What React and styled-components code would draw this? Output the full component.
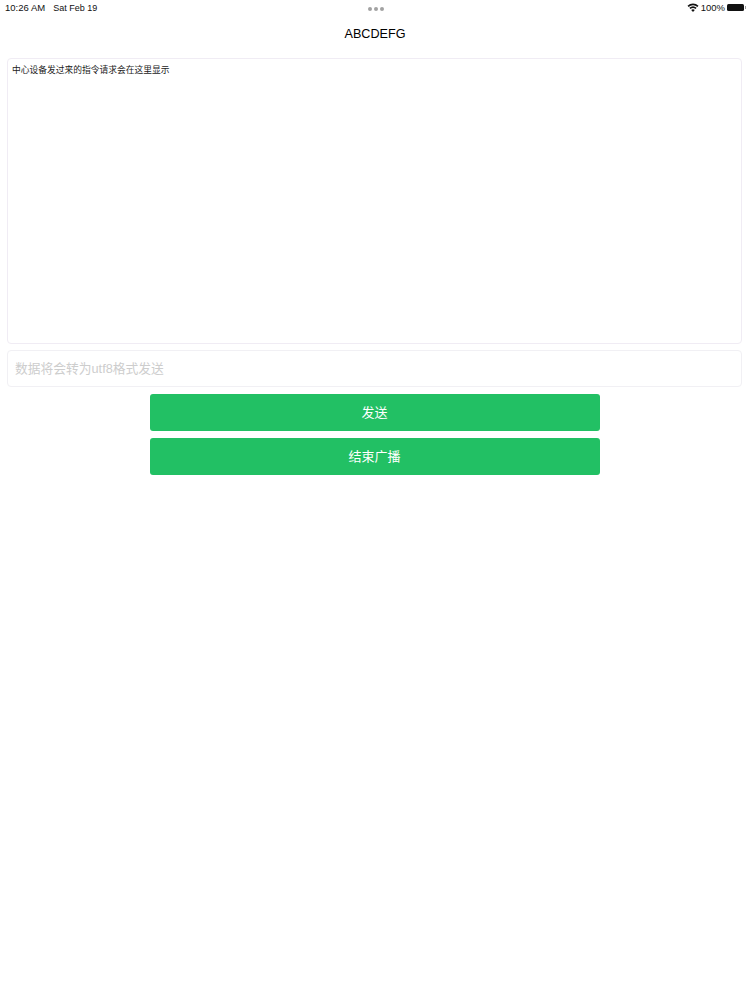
import React from 'react'
import styled, { createGlobalStyle } from 'styled-components'

const Global = createGlobalStyle`
  html, body {
    margin: 0;
    padding: 0;
    background: #fff;
  }
  * {
    box-sizing: border-box;
  }
`

const Page = styled.div`
  width: 750px;
  height: 1000px;
  background: #fff;
  color: #000;
  font-family: "Liberation Sans", "Noto Sans CJK SC", sans-serif;
`

const StatusBar = styled.div`
  height: 14px;
  padding: 0 4px 0 5px;
  display: grid;
  grid-template-columns: 1fr auto 1fr;
  align-items: center;
  font-size: 9.5px;
  color: #111;
`

const StatusLeft = styled.div`
  display: flex;
  align-items: baseline;
  gap: 8px;
`

const DateText = styled.span`
  font-size: 9px;
`

const StatusRight = styled.div`
  display: flex;
  align-items: center;
  justify-content: flex-end;
  gap: 2px;
`

const Dots = styled.div`
  display: flex;
  gap: 2px;
  margin-top: 4px;
`

const Dot = styled.span`
  width: 4px;
  height: 4px;
  border-radius: 50%;
  background: #a2a2a2;
`

const Battery = styled.div`
  display: flex;
  align-items: center;
  gap: 1px;
  &::after {
    content: '';
    width: 1px;
    height: 3px;
    background: #999;
  }
`

const BatteryBody = styled.span`
  width: 17px;
  height: 7px;
  border-radius: 1.5px;
  background: #111;
`

const Title = styled.h1`
  margin: 0;
  height: 38px;
  padding-top: 1px;
  display: flex;
  align-items: center;
  justify-content: center;
  font-size: 12.6px;
  font-weight: 400;
`

const Content = styled.div`
  padding: 6px 8px 0 7px;
  display: flex;
  flex-direction: column;
  align-items: center;
`

const LogBox = styled.div`
  width: 100%;
  height: 286px;
  padding: 5px 4px;
  border: 1px solid #f0ecf4;
  border-radius: 4px;
  font-size: 8.75px;
  line-height: 12px;
  color: #222;
`

const DataInput = styled.input`
  width: 100%;
  height: 37px;
  margin: 6px 0 7px;
  padding: 0 7px;
  border: 1px solid #f1f0f4;
  border-radius: 4px;
  outline: none;
  font-family: inherit;
  font-size: 12.75px;
  &::placeholder {
    color: #cdcdcd;
    opacity: 1;
  }
`

const ActionButton = styled.button`
  width: 450px;
  height: 37px;
  margin-bottom: 7px;
  padding: 0 0 2px;
  border: none;
  border-radius: 3px;
  background: #22c064;
  color: #fff;
  font-family: inherit;
  font-size: 13px;
`

const WifiIcon = () => (
  <svg width="12" height="9" viewBox="0 0 24 18" fill="#111">
    <path d="M12 18l-3.6-4.2a5.6 5.6 0 0 1 7.2 0z" />
    <path d="M6.9 12L4.7 9.5a11.300 11.300 0 0 1 14.600 0L17.100 12a8 8 0 0 0-10.200 0z" />
    <path d="M3.300 7.900L1 5.300a16.800 16.800 0 0 1 22 0l-2.300 2.600a13.300 13.300 0 0 0-17.400 0z" />
  </svg>
)

export default function App() {
  return (
    <Page>
      <Global />
      <StatusBar>
        <StatusLeft>
          <span>10:26 AM</span>
          <DateText>Sat Feb 19</DateText>
        </StatusLeft>
        <Dots>
          <Dot />
          <Dot />
          <Dot />
        </Dots>
        <StatusRight>
          <WifiIcon />
          <span>100%</span>
          <Battery>
            <BatteryBody />
          </Battery>
        </StatusRight>
      </StatusBar>
      <Title>ABCDEFG</Title>
      <Content>
        <LogBox>中心设备发过来的指令请求会在这里显示</LogBox>
        <DataInput placeholder="数据将会转为utf8格式发送" />
        <ActionButton>发送</ActionButton>
        <ActionButton>结束广播</ActionButton>
      </Content>
    </Page>
  )
}
